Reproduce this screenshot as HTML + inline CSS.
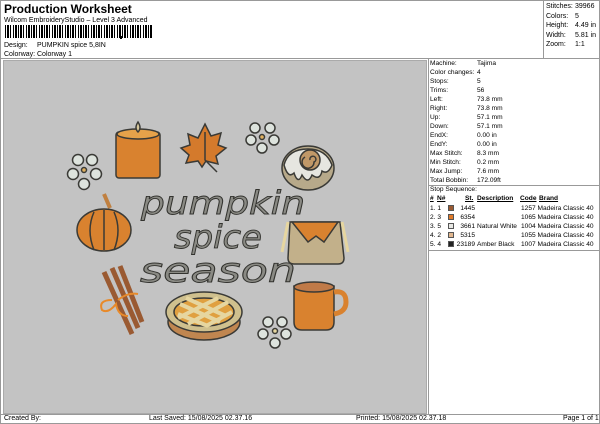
<!DOCTYPE html>
<html><head><meta charset="utf-8"><style>
*{margin:0;padding:0;box-sizing:border-box}
body{width:600px;height:424px;background:#fff;font-family:"Liberation Sans",sans-serif;font-size:7px;color:#000;position:relative;overflow:hidden}
.a{position:absolute;white-space:nowrap}
.bc{position:absolute;left:5px;top:25px;height:13px;width:148px;background:repeating-linear-gradient(90deg,#000 0 1px,#fff 1px 2px,#000 2px 4px,#fff 4px 5px,#000 5px 6px,#fff 6px 8px,#000 8px 9px,#fff 9px 10px,#000 10px 12px,#fff 12px 13px)}
.r{font-size:6.6px}
</style></head><body>
<div class="a" style="left:0;top:0;width:600px;height:424px;border:1px solid #999"></div>
<div class="a" style="left:4px;top:2px;font-size:12px;font-weight:bold">Production Worksheet</div>
<div class="a" style="left:4px;top:17px">Wilcom EmbroideryStudio – Level 3 Advanced</div>
<div class="bc"></div>
<div class="a" style="left:120px;top:36px;width:2px;height:3px;background:#000"></div>
<div class="a" style="left:4px;top:42px">Design:</div><div class="a" style="left:37px;top:42px">PUMPKIN spice 5,8IN</div>
<div class="a" style="left:4px;top:51px">Colorway:</div><div class="a" style="left:37px;top:51px">Colorway 1</div>
<div class="a" style="left:543px;top:0;width:1px;height:58px;background:#999"></div>
<div class="a" style="left:546px;top:2px;line-height:9.6px">Stitches:<br>Colors:<br>Height:<br>Width:<br>Zoom:</div>
<div class="a" style="left:575px;top:2px;line-height:9.6px">39966<br>5<br>4.49 in<br>5.81 in<br>1:1</div>
<div class="a" style="left:0;top:58px;width:600px;height:1px;background:#999"></div>
<div class="a" style="left:3px;top:60px;width:424px;height:354px;background:#c3c3c3;border:1px solid #aaa"></div>
<div class="a" style="left:428px;top:59px;width:1px;height:355px;background:#999"></div>
<div class="a r" style="left:430px;top:59px;line-height:9px">Machine:<br>Color changes:<br>Stops:<br>Trims:<br>Left:<br>Right:<br>Up:<br>Down:<br>EndX:<br>EndY:<br>Max Stitch:<br>Min Stitch:<br>Max Jump:<br>Total Bobbin:</div>
<div class="a r" style="left:477px;top:59px;line-height:9px">Tajima<br>4<br>5<br>56<br>73.8 mm<br>73.8 mm<br>57.1 mm<br>57.1 mm<br>0.00 in<br>0.00 in<br>8.3 mm<br>0.2 mm<br>7.6 mm<br>172.09ft</div>
<div class="a" style="left:428px;top:185px;width:172px;height:1px;background:#999"></div>
<div class="a r" style="left:430px;top:186px">Stop Sequence:</div>
<div class="a r" style="left:430px;top:195px;font-weight:bold;text-decoration:underline">#</div>
<div class="a r" style="left:437px;top:195px;font-weight:bold;text-decoration:underline">N#</div>
<div class="a r" style="left:465px;top:195px;font-weight:bold;text-decoration:underline">St.</div>
<div class="a r" style="left:477px;top:195px;font-weight:bold;text-decoration:underline">Description</div>
<div class="a r" style="left:520px;top:195px;font-weight:bold;text-decoration:underline">Code</div>
<div class="a r" style="left:539px;top:195px;font-weight:bold;text-decoration:underline">Brand</div>
<div class="a r" style="left:430px;top:204px;line-height:9px">1. 1<br>2. 3<br>3. 5<br>4. 2<br>5. 4</div>
<div class="a" style="left:448px;top:205px;width:6px;height:6px;background:#9a5a32;border:1px solid #555"></div>
<div class="a" style="left:448px;top:214px;width:6px;height:6px;background:#e07a28;border:1px solid #555"></div>
<div class="a" style="left:448px;top:223px;width:6px;height:6px;background:#e8e8e4;border:1px solid #555"></div>
<div class="a" style="left:448px;top:232px;width:6px;height:6px;background:#e2b890;border:1px solid #555"></div>
<div class="a" style="left:448px;top:241px;width:6px;height:6px;background:#222;border:1px solid #555"></div>
<div class="a r" style="left:455px;top:204px;line-height:9px;text-align:right;width:20px">1445<br>6354<br>3661<br>5315<br>23189</div>
<div class="a r" style="left:477px;top:204px;line-height:9px"><br><br>Natural White<br><br>Amber Black</div>
<div class="a r" style="left:521px;top:204px;line-height:9px">1257 Madeira Classic 40<br>1065 Madeira Classic 40<br>1004 Madeira Classic 40<br>1055 Madeira Classic 40<br>1007 Madeira Classic 40</div>
<div class="a" style="left:428px;top:250px;width:172px;height:1px;background:#999"></div>
<div class="a" style="left:0;top:414px;width:600px;height:1px;background:#999"></div>
<div class="a" style="left:4px;top:415px">Created By:</div>
<div class="a" style="left:149px;top:415px">Last Saved: 15/08/2025 02.37.16</div>
<div class="a" style="left:356px;top:415px">Printed: 15/08/2025 02.37.18</div>
<div class="a" style="left:563px;top:415px">Page 1 of 1</div>

<svg class="a" style="left:0;top:0" width="600" height="424" stroke="#3a3a36" stroke-width="1.5">
<rect x="116" y="132" width="44" height="46" rx="3" fill="#d9822f"/>
<ellipse cx="138" cy="134" rx="21" ry="5" fill="#e6a24a"/>
<path d="M138 122 q4 6 0 10 q-4-4 0-10z" fill="#d6c79c"/>
<path d="M205 124 l6 12 l10-3 l-3 12 l8 3 l-10 8 l2 8 l-12-3 l-4 6 l-4-6 l-12 2 l3-8 l-8-7 l9-3 l-2-11 l10 4z" fill="#d47a2c"/>
<path d="M205 132 v28 l12 12" fill="none"/>
<g fill="#dde3dd"><circle cx="255" cy="128" r="5"/><circle cx="270" cy="128" r="5"/><circle cx="274" cy="140" r="5"/><circle cx="262" cy="148" r="5"/><circle cx="251" cy="140" r="5"/><circle cx="262" cy="137" r="2.5" fill="#e0b060"/></g>
<g fill="#dde3dd"><circle cx="78" cy="160" r="5.5"/><circle cx="92" cy="160" r="5.5"/><circle cx="96" cy="174" r="5.5"/><circle cx="84" cy="184" r="5.5"/><circle cx="73" cy="174" r="5.5"/><circle cx="84" cy="170" r="2.5" fill="#e0b060"/></g>
<g fill="#dde3dd"><circle cx="268" cy="322" r="5"/><circle cx="282" cy="322" r="5"/><circle cx="286" cy="334" r="5"/><circle cx="275" cy="343" r="5"/><circle cx="263" cy="334" r="5"/><circle cx="275" cy="331" r="2.5" fill="#e6d6a0"/></g>
<ellipse cx="308" cy="168" rx="26" ry="22" fill="#b7a98a"/>
<path d="M284 165 q4 14 10 8 q4 12 8 2 q6 10 10 0 q8 6 10-4 q6 4 10-6 q-6-16-24-16 q-20 0-24 16z" fill="#e6e6e0"/>
<circle cx="310" cy="160" r="10" fill="#c09868"/><path d="M310 160 a3 3 0 1 1 4 2 a6 6 0 1 1 -9 -5" fill="none"/>
<path d="M104 194 l6 14" stroke-width="4" stroke="#c08040"/>
<ellipse cx="104" cy="230" rx="27" ry="21" fill="#d9822f"/>
<path d="M94 212 q-8 18 0 38 M114 212 q8 18 0 38 M104 210 v40" fill="none"/>
<g font-family="'DejaVu Sans',sans-serif" font-style="italic" fill="#8a8a84" stroke="#33332f" stroke-width="0.9">
<text x="141" y="214" font-size="32" textLength="164" lengthAdjust="spacingAndGlyphs">pumpkin</text>
<text x="174" y="248" font-size="32" textLength="88" lengthAdjust="spacingAndGlyphs">spice</text>
<text x="140" y="282" font-size="34" textLength="156" lengthAdjust="spacingAndGlyphs">season</text>
</g>
<path d="M290 222 h50 l4 36 q0 6 -6 6 h-44 q-6 0 -6-6z" fill="#c2b08a"/>
<path d="M292 222 h46 l-14 20 l-8 -6 l-8 6z" fill="#d9822f"/>
<path d="M288 222 l-6 30 M342 222 l6 30" stroke="#e6d6a0" stroke-width="3"/>
<path d="M294 286 h40 v36 q0 8 -8 8 h-24 q-8 0 -8-8z" fill="#d9822f"/>
<ellipse cx="314" cy="287" rx="20" ry="5" fill="#c07a48"/>
<path d="M334 292 q12-2 12 10 q0 10 -12 12" fill="none" stroke="#d9822f" stroke-width="5"/>
<path d="M104 272 l28 62 M112 268 l26 60 M120 266 l22 56" stroke="#9a5a32" stroke-width="5"/>
<path d="M112 300 q-14 0 -10 10 q6 4 14-6 q2 12 12 12 M118 300 q10-8 20-6" fill="none" stroke="#e88a2a" stroke-width="2"/>
<ellipse cx="204" cy="322" rx="36" ry="18" fill="#c08650"/>
<ellipse cx="204" cy="312" rx="38" ry="20" fill="#cfc08e"/>
<ellipse cx="204" cy="312" rx="30" ry="14" fill="#e0a040"/>
<path d="M180 304 l40 18 M186 298 l40 18 M178 314 l30 12 M228 302 l-40 22 M218 298 l-40 20 M232 312 l-26 14" stroke="#e6d6a0" stroke-width="4"/>
</svg>
</body></html>
